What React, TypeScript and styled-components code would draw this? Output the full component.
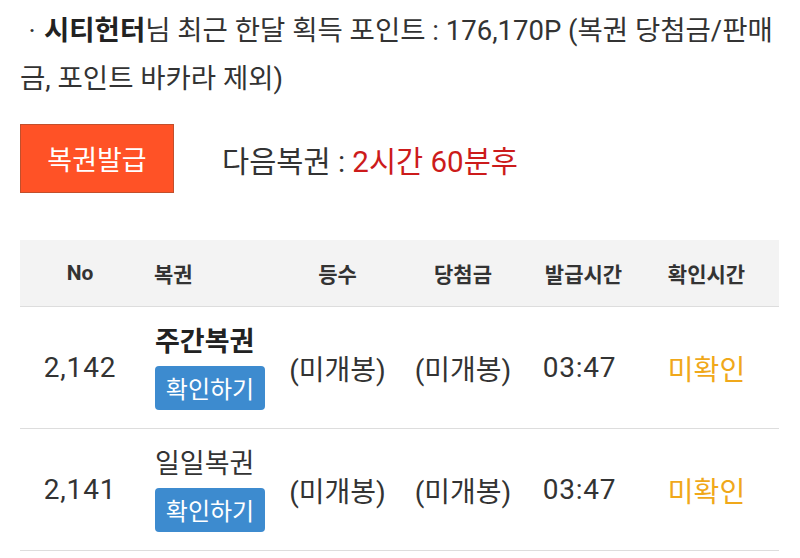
import React from "react";
import styled, { createGlobalStyle } from "styled-components";

const GlobalStyle = createGlobalStyle`
  html, body {
    margin: 0;
    padding: 0;
    background: #ffffff;
  }
  body {
    font-family: "Roboto", "Noto Sans CJK KR", sans-serif;
    color: #333333;
  }
`;

interface Ticket {
  no: string;
  name: string;
  highlight?: boolean;
  rank: string;
  prize: string;
  issuedAt: string;
  status: string;
}

const tickets: Ticket[] = [
  { no: "2,142", name: "주간복권", highlight: true, rank: "(미개봉)", prize: "(미개봉)", issuedAt: "03:47", status: "미확인" },
  { no: "2,141", name: "일일복권", rank: "(미개봉)", prize: "(미개봉)", issuedAt: "03:47", status: "미확인" },
];

const App: React.FunctionComponent = () => {
  return (
    <>
      <GlobalStyle />
      <Page>
        <Intro>
          <Bullet>·</Bullet>
          <strong>시티헌터</strong>님 최근 한달 획득 포인트 : 176,170P (복권 당첨금/판매금, 포인트 바카라
          제외)
        </Intro>
        <ActionRow>
          <IssueButton type="button">복권발급</IssueButton>
          <NextTicket>
            다음복권 : <Remaining>2시간 60분후</Remaining>
          </NextTicket>
        </ActionRow>
        <Table>
          <colgroup>
            <col style={{ width: 120 }} />
            <col style={{ width: 142 }} />
            <col style={{ width: 111 }} />
            <col style={{ width: 140 }} />
            <col style={{ width: 101 }} />
            <col />
          </colgroup>
          <thead>
            <tr>
              <HeadCell>No</HeadCell>
              <HeadCell align="left">복권</HeadCell>
              <HeadCell>등수</HeadCell>
              <HeadCell>당첨금</HeadCell>
              <HeadCell>발급시간</HeadCell>
              <HeadCell>확인시간</HeadCell>
            </tr>
          </thead>
          <tbody>
            {tickets.map((t) => (
              <tr key={t.no}>
                <NumberCell>{t.no}</NumberCell>
                <Cell align="left">
                  <TicketName highlight={t.highlight}>{t.name}</TicketName>
                  <CheckButton type="button">확인하기</CheckButton>
                </Cell>
                <Cell>{t.rank}</Cell>
                <Cell>{t.prize}</Cell>
                <TimeCell>{t.issuedAt}</TimeCell>
                <StatusCell>{t.status}</StatusCell>
              </tr>
            ))}
          </tbody>
        </Table>
      </Page>
    </>
  );
};

export default App;

const Page = styled("div")`
  padding: 7px 21px 0 20px;
`;

const Intro = styled("p")`
  margin: 0;
  font-size: 27.5px;
  line-height: 48px;
  color: #333333;

  strong {
    font-weight: 700;
    color: #222222;
  }
`;

const Bullet = styled("span")`
  display: inline-block;
  width: 24px;
  text-align: center;
`;

const ActionRow = styled("div")`
  display: flex;
  align-items: center;
  gap: 48px;
  margin-top: 21px;
`;

const IssueButton = styled("button")`
  width: 154px;
  height: 69px;
  padding: 0;
  background: #ff5226;
  border: 1px solid #c24f2c;
  color: #ffffff;
  font-family: inherit;
  font-size: 27px;
  cursor: pointer;
`;

const NextTicket = styled("div")`
  font-size: 29.5px;
  color: #333333;
`;

const Remaining = styled("span")`
  color: #cc1b1b;
`;

const Table = styled("table")`
  width: 100%;
  margin-top: 47px;
  border-collapse: collapse;
  table-layout: fixed;
`;

const HeadCell = styled("th").withConfig({
  shouldForwardProp: (prop) => !["align"].includes(prop),
})<{ align?: "left" | "center" }>`
  height: 66px;
  padding: 0 0 0 ${({ align }) => (align === "left" ? "14px" : "0")};
  background: #f3f3f3;
  border-bottom: 1px solid #dddddd;
  font-size: 21px;
  font-weight: 700;
  color: #333333;
  text-align: ${({ align }) => align ?? "center"};
`;

const Cell = styled("td").withConfig({
  shouldForwardProp: (prop) => !["align"].includes(prop),
})<{ align?: "left" | "center" }>`
  height: 121px;
  padding: 0 0 0 ${({ align }) => (align === "left" ? "15px" : "0")};
  border-bottom: 1px solid #dddddd;
  font-size: 28px;
  color: #333333;
  text-align: ${({ align }) => align ?? "center"};
  vertical-align: middle;
`;

const NumberCell = styled(Cell)`
  letter-spacing: 0.8px;
`;

const TimeCell = styled(NumberCell)`
  padding-right: 8px;
`;

const StatusCell = styled(Cell)`
  color: #f0a81a;
`;

const TicketName = styled("div").withConfig({
  shouldForwardProp: (prop) => !["highlight"].includes(prop),
})<{ highlight?: boolean }>`
  font-size: 27px;
  line-height: 32px;
  font-weight: ${({ highlight }) => (highlight ? 700 : 400)};
  color: ${({ highlight }) => (highlight ? "#222222" : "#333333")};
`;

const CheckButton = styled("button")`
  display: block;
  margin-top: 8px;
  width: 110px;
  height: 44px;
  padding: 0;
  background: #3d8bcf;
  border: none;
  border-radius: 4px;
  color: #ffffff;
  font-family: inherit;
  font-size: 24px;
  cursor: pointer;
`;
